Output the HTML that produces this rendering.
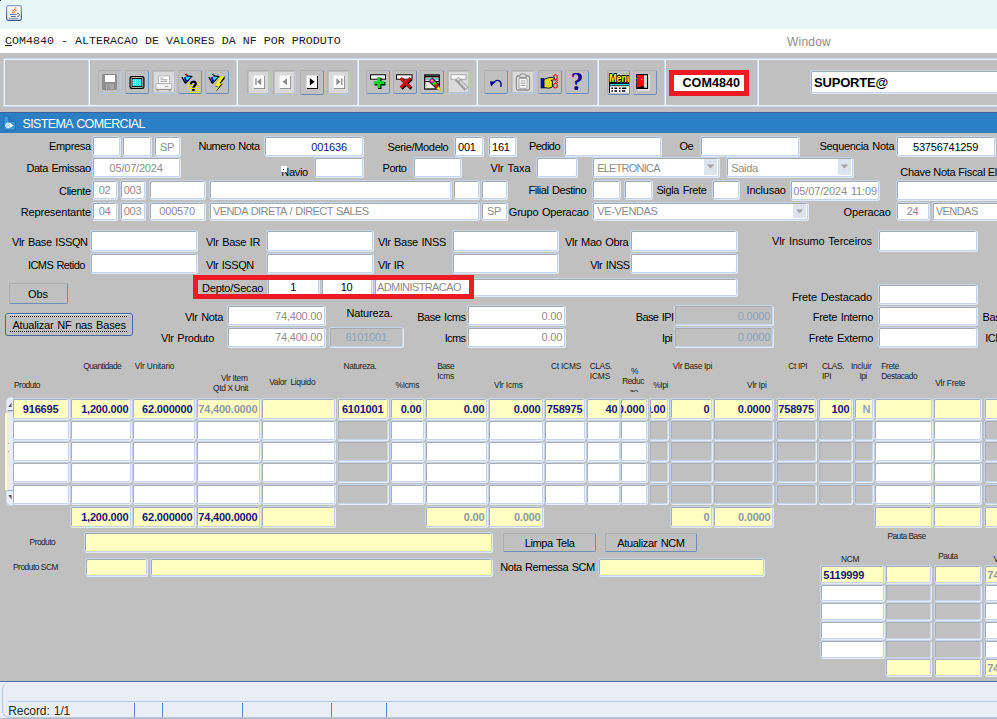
<!DOCTYPE html>
<html><head><meta charset="utf-8"><title>COM4840</title>
<style>
html,body{margin:0;padding:0;}
body{width:997px;height:719px;overflow:hidden;background:#c0c0c0;font-family:"Liberation Sans",sans-serif;}
#root{position:relative;width:997px;height:719px;overflow:hidden;background:#c0c0c0;}
#root div,#root svg{position:absolute;box-sizing:border-box;}
.l{white-space:pre;line-height:1;}
.f{background:#fff;border:1px solid #c4d4ec;border-radius:2px;box-shadow:inset 1px 1px 0 #a9a9a9,1px 1px 0 #e2e8f2;font-size:11px;white-space:nowrap;overflow:hidden;color:#000;}
.f.y{background:#ffffc2;}
.f.g{background:#c0c0c0;}
.f.dis{color:#8c8c8c;}
.tb{background:#c0c0c0;border-radius:2px;border:1px solid;border-color:#b0b0b0 #7090b8 #6a8ab8 #b0b0b0;}
.tb.d{border-color:#b2b2b2 #b4cbea #b4cbea #b2b2b2;}
.btn{background:#c0c0c0;border:1px solid;border-color:#adadad #6c8cba #6c8cba #adadad;border-radius:2px;text-align:center;font-size:10.67px;white-space:nowrap;}
.sep{background:#dfe8f6;width:1px;}
.f.gf{border-color:#c5d4ea;box-shadow:inset 1px 1px 0 #a9aeb6,1px 1px 0 #e8edf5;border-radius:2px;}

</style></head>
<body>
<div id="root">
<div style="left:0;top:0;width:997px;height:29px;background:#e7f6f7;"></div>
<svg style="left:5px;top:4px" width="18" height="18" viewBox="0 0 18 18">
<defs><linearGradient id="jg" x1="0" y1="0" x2="0" y2="1"><stop offset="0" stop-color="#fdfdfd"/><stop offset="1" stop-color="#e4e6ea"/></linearGradient>
<linearGradient id="jb" x1="0" y1="0" x2="0" y2="1"><stop offset="0" stop-color="#8aa2c0"/><stop offset="1" stop-color="#3b5a84"/></linearGradient></defs>
<rect x="1.6" y="1.6" width="14.8" height="14.8" rx="1.8" fill="url(#jg)" stroke="url(#jb)" stroke-width="1.2"/>
<path d="M8.4 9.4 C6.2 7 10.4 5.6 10.8 3.4" fill="none" stroke="#e8781c" stroke-width="1.3" stroke-dasharray="1.6 0.5"/>
<path d="M9.6 8.6 C8.8 7.2 11.4 6.6 12 5.6" fill="none" stroke="#e8781c" stroke-width="1.1" stroke-dasharray="1.4 0.5"/>
<path d="M4.8 10.4 H11.6" stroke="#44638e" stroke-width="0.9" fill="none"/>
<path d="M6 12.5 H10.8" stroke="#44638e" stroke-width="0.9" fill="none"/>
<path d="M4 14.4 H13" stroke="#5a7aa6" stroke-width="0.7" fill="none"/>
<path d="M12.2 9.2 C15.4 9.4 15 12.4 12.2 12.6" fill="none" stroke="#4a6a98" stroke-width="1"/>
</svg>
<div style="left:0;top:0;width:1.4px;height:0.9px;background:#2a3a66;"></div>
<div style="left:0;top:29px;width:997px;height:24px;background:#fff;"></div>
<div class="l" style="left:5px;top:36px;font-family:'Liberation Mono',monospace;font-size:11.67px;color:#1c1c1c;"><span style="text-decoration:underline">C</span>OM4840 - ALTERACAO DE VALORES DA NF POR PRODUTO</div>
<div class="l" style="top:36.44px;font-size:12px;color:#8c8c8c;left:787px;letter-spacing:0.22px;">Window</div>
<div style="left:3px;top:58px;width:1000px;height:49px;border:1px solid #c6d8f0;"></div><div style="left:4px;top:59px;width:1000px;height:47px;border:1px solid #eef3fa;"></div>
<div style="left:88px;top:60px;height:45px;width:1px;background:#c8dcf4;"></div><div style="left:89px;top:60px;height:45px;width:1px;background:#f0f4fa;"></div>
<div style="left:236px;top:60px;height:45px;width:1px;background:#c8dcf4;"></div><div style="left:237px;top:60px;height:45px;width:1px;background:#f0f4fa;"></div>
<div style="left:357px;top:60px;height:45px;width:1px;background:#c8dcf4;"></div><div style="left:358px;top:60px;height:45px;width:1px;background:#f0f4fa;"></div>
<div style="left:476px;top:60px;height:45px;width:1px;background:#c8dcf4;"></div><div style="left:477px;top:60px;height:45px;width:1px;background:#f0f4fa;"></div>
<div style="left:597px;top:60px;height:45px;width:1px;background:#c8dcf4;"></div><div style="left:598px;top:60px;height:45px;width:1px;background:#f0f4fa;"></div>
<div style="left:664px;top:60px;height:45px;width:1px;background:#c8dcf4;"></div><div style="left:665px;top:60px;height:45px;width:1px;background:#f0f4fa;"></div>
<div style="left:757px;top:60px;height:45px;width:1px;background:#c8dcf4;"></div><div style="left:758px;top:60px;height:45px;width:1px;background:#f0f4fa;"></div>
<div class="tb" style="left:98px;top:70px;width:23px;height:24px;"></div>
<div class="tb d" style="left:98px;top:70px;width:23px;height:24px;"></div>
<svg style="left:97.6px;top:70px" width="24" height="24" viewBox="0 0 24 24"><rect x="4" y="4" width="15" height="16" rx="1.2" fill="#8f8f8f"/>
<rect x="7" y="5" width="10" height="7" fill="#fff"/>
<rect x="8" y="14" width="8" height="6" fill="#a8a8a8"/>
<rect x="9.5" y="15" width="2" height="4" fill="#8f8f8f"/>
<path d="M7 4.5 H17" stroke="#777" stroke-width="1" stroke-dasharray="1 1"/>
<path d="M7 19.6 H16" stroke="#666" stroke-width="0.8" stroke-dasharray="1 1.2"/></svg>
<div class="tb" style="left:125px;top:70px;width:24px;height:24px;"></div>
<svg style="left:125px;top:70px" width="24" height="24" viewBox="0 0 24 24"><rect x="4.5" y="6" width="15" height="13" rx="2" fill="#000"/>
<rect x="6.2" y="7.6" width="11.6" height="9.8" rx="1" fill="none" stroke="#c8c8c8" stroke-width="1"/>
<rect x="7.5" y="9" width="9" height="7" fill="#38e0e8"/>
<path d="M7.5 10.4 H16.5 M7.5 12.4 H16.5 M7.5 14.4 H16.5" stroke="#e8ffff" stroke-width="0.7" stroke-dasharray="1.2 1"/></svg>
<div class="tb d" style="left:152px;top:70px;width:24px;height:24px;"></div>
<div style="left:154px;top:72px;width:20px;height:20px;background:#dadada;"></div>
<svg style="left:152px;top:70px" width="24" height="24" viewBox="0 0 24 24"><rect x="6.4" y="6" width="11.2" height="7.6" fill="#fff" stroke="#aaa" stroke-width="0.8"/>
<path d="M8.4 8 H11 M8.4 9.8 H15.4 M8.4 11.6 H15.4" stroke="#8a8a8a" stroke-width="0.8"/>
<rect x="4" y="13.8" width="15.4" height="5.4" fill="#f6f6f6" stroke="#a6a6a6" stroke-width="0.7"/>
<path d="M4 19.6 H19.4" stroke="#8a8a8a" stroke-width="1"/>
<path d="M5.6 20.2 V21.2 M17.6 20.2 V21.2" stroke="#8a8a8a" stroke-width="1.4"/>
<path d="M13 16.6 H16.5" stroke="#999" stroke-width="0.9"/></svg>
<div class="tb" style="left:178px;top:70px;width:24px;height:24px;"></div>
<svg style="left:178px;top:70px" width="24" height="24" viewBox="0 0 24 24"><path d="M5.8 7.6 L9.2 6.2 L13.4 6.8 L7.4 13.2 Z" fill="#0a10e8"/>
<path d="M8.2 6.8 L13.4 6.8 L9.8 10.6 L7.8 9 Z" fill="#10e8f4"/>
<path d="M3.9 7.1 L7.4 13.4" stroke="#000" stroke-width="1.2" fill="none"/>
<path d="M7.1 4.1 L9.6 5.8 L13.8 6.5 L7.6 13.4" stroke="#000" stroke-width="1.1" fill="none"/>
<circle cx="8.5" cy="4.3" r="0.75" fill="#f01010"/><rect x="10" y="12" width="1" height="1" fill="#f8f010"/><rect x="10" y="14" width="1" height="1" fill="#f8f010"/><rect x="10" y="16" width="1" height="1" fill="#f8f010"/><rect x="10" y="18" width="1" height="1" fill="#f8f010"/><rect x="12" y="12" width="1" height="1" fill="#f8f010"/><rect x="12" y="14" width="1" height="1" fill="#f8f010"/><rect x="12" y="16" width="1" height="1" fill="#f8f010"/><rect x="12" y="18" width="1" height="1" fill="#f8f010"/><rect x="12" y="20" width="1" height="1" fill="#f8f010"/><rect x="12" y="22" width="1" height="1" fill="#f8f010"/><rect x="14" y="12" width="1" height="1" fill="#f8f010"/><rect x="14" y="14" width="1" height="1" fill="#f8f010"/><rect x="14" y="16" width="1" height="1" fill="#f8f010"/><rect x="14" y="18" width="1" height="1" fill="#f8f010"/><rect x="14" y="20" width="1" height="1" fill="#f8f010"/><rect x="14" y="22" width="1" height="1" fill="#f8f010"/><rect x="16" y="12" width="1" height="1" fill="#f8f010"/><rect x="16" y="14" width="1" height="1" fill="#f8f010"/><rect x="16" y="16" width="1" height="1" fill="#f8f010"/><rect x="16" y="18" width="1" height="1" fill="#f8f010"/><rect x="16" y="20" width="1" height="1" fill="#f8f010"/><rect x="16" y="22" width="1" height="1" fill="#f8f010"/><rect x="18" y="12" width="1" height="1" fill="#f8f010"/><rect x="18" y="14" width="1" height="1" fill="#f8f010"/><rect x="18" y="16" width="1" height="1" fill="#f8f010"/><rect x="18" y="18" width="1" height="1" fill="#f8f010"/><rect x="18" y="20" width="1" height="1" fill="#f8f010"/><rect x="18" y="22" width="1" height="1" fill="#f8f010"/><rect x="20" y="12" width="1" height="1" fill="#f8f010"/><rect x="20" y="14" width="1" height="1" fill="#f8f010"/><rect x="20" y="16" width="1" height="1" fill="#f8f010"/><rect x="20" y="18" width="1" height="1" fill="#f8f010"/><rect x="20" y="20" width="1" height="1" fill="#f8f010"/><rect x="20" y="22" width="1" height="1" fill="#f8f010"/>
<path d="M12.9 14.4 C12.6 11 18 10.8 17.8 14 C17.7 15.6 15.4 15.6 15.4 17.8" fill="none" stroke="#000" stroke-width="2.2"/>
<rect x="14.1" y="19" width="2.6" height="1.9" fill="#000"/></svg>
<div class="tb" style="left:205px;top:70px;width:24px;height:24px;"></div>
<svg style="left:205px;top:70px" width="24" height="24" viewBox="0 0 24 24"><path d="M5.8 7.6 L9.2 6.2 L13.4 6.8 L7.4 13.2 Z" fill="#0a10e8"/>
<path d="M8.2 6.8 L13.4 6.8 L9.8 10.6 L7.8 9 Z" fill="#10e8f4"/>
<path d="M3.9 7.1 L7.4 13.4" stroke="#000" stroke-width="1.2" fill="none"/>
<path d="M7.1 4.1 L9.6 5.8 L13.8 6.5 L7.6 13.4" stroke="#000" stroke-width="1.1" fill="none"/>
<circle cx="8.5" cy="4.3" r="0.75" fill="#f01010"/><path d="M20.6 6.4 L16 6.4 L10.6 16.4 L14.2 16.4 L10.4 22 L18 13.8 L15.2 13.8 L20.2 8.2 L18.6 8.2 Z" fill="#000"/><path d="M19.6 6 L15.2 6.2 L9.8 16 L13.4 16 L9.6 21.4 L17 13.4 L14.4 13.4 Z" fill="#f8f410"/><path d="M15.2 6.2 L9.8 16 L12 16" stroke="#9a9a9a" stroke-width="0.5" fill="none"/></svg>
<div class="tb d" style="left:247px;top:70px;width:23px;height:24.5px;"></div>
<div style="left:249px;top:72px;width:19px;height:20.5px;background:#dadada;"></div>
<svg style="left:247px;top:70px" width="24" height="24" viewBox="0 0 24 24"><rect x="7" y="6" width="11" height="13" fill="#8c8c8c"/><rect x="6.5" y="5.5" width="10.6" height="12.6" fill="#fafafa"/><rect x="8.3" y="8.4" width="1.3" height="6.6" fill="#8c8c8c"/><path d="M14.2 8.2 V15.2 L10 11.7 Z" fill="#8c8c8c"/></svg>
<div class="tb d" style="left:273px;top:70px;width:23px;height:24.5px;"></div>
<div style="left:275px;top:72px;width:19px;height:20.5px;background:#dadada;"></div>
<svg style="left:273px;top:70px" width="24" height="24" viewBox="0 0 24 24"><rect x="7" y="6" width="11" height="13" fill="#8c8c8c"/><rect x="6.5" y="5.5" width="10.6" height="12.6" fill="#fafafa"/><path d="M14 8.2 V15.2 L9.6 11.7 Z" fill="#8c8c8c"/></svg>
<div class="tb" style="left:299.5px;top:70px;width:24px;height:24.5px;"></div>
<svg style="left:299.5px;top:70px" width="24" height="24" viewBox="0 0 24 24"><rect x="7" y="6" width="11" height="13" fill="#000"/><rect x="6.5" y="5.5" width="10.6" height="12.6" fill="#fafafa"/><path d="M9.8 8 V15.4 L14.6 11.7 Z" fill="#000"/></svg>
<div class="tb d" style="left:327px;top:70px;width:23px;height:24.5px;"></div>
<div style="left:329px;top:72px;width:19px;height:20.5px;background:#dadada;"></div>
<svg style="left:327px;top:70px" width="24" height="24" viewBox="0 0 24 24"><rect x="7" y="6" width="11" height="13" fill="#8c8c8c"/><rect x="6.5" y="5.5" width="10.6" height="12.6" fill="#fafafa"/><rect x="14.2" y="8.4" width="1.3" height="6.6" fill="#8c8c8c"/><path d="M9.4 8.2 V15.2 L13.6 11.7 Z" fill="#8c8c8c"/></svg>
<div class="tb" style="left:366px;top:70px;width:24px;height:24px;"></div>
<svg style="left:366px;top:70px" width="24" height="24" viewBox="0 0 24 24"><rect x="4.5" y="4.8" width="15" height="4.4" fill="#fff" stroke="#000" stroke-width="1"/>
<path d="M13.8 8 V19 M8.6 13.8 H19.4" stroke="#000" stroke-width="3.4"/>
<path d="M12.8 7 V18 M7.6 12.8 H18.4" stroke="#10d820" stroke-width="3"/></svg>
<div class="tb" style="left:393px;top:70px;width:24px;height:24px;"></div>
<svg style="left:393px;top:70px" width="24" height="24" viewBox="0 0 24 24"><rect x="3.6" y="4.8" width="15.4" height="4.4" fill="#fff" stroke="#000" stroke-width="1"/>
<path d="M8.6 9 L18.4 18.6 M18.4 9 L8.6 18.6" stroke="#000" stroke-width="3.2"/>
<path d="M7.6 8 L17.4 17.6 M17.4 8 L7.6 17.6" stroke="#d01018" stroke-width="2.8"/></svg>
<div class="tb" style="left:420px;top:70px;width:24px;height:24px;"></div>
<svg style="left:420px;top:70px" width="24" height="24" viewBox="0 0 24 24"><rect x="4.8" y="5" width="14.4" height="14" fill="#fff" stroke="#000" stroke-width="1.3"/>
<path d="M5 6.6 H19" stroke="#000" stroke-width="1.6"/>
<path d="M5.5 9 H19" stroke="#209090" stroke-width="1.2"/>
<path d="M5.5 11.5 H19" stroke="#000" stroke-width="1.2"/>
<path d="M5 19 L5 14 L9 14 Z" fill="#c8c8c8"/>
<path d="M10.5 9.5 L18 17" stroke="#000" stroke-width="5.4" stroke-linecap="butt"/>
<path d="M10.6 9.6 L13.4 12.4" stroke="#f018c0" stroke-width="4"/>
<path d="M13.4 12.4 L15.6 14.6" stroke="#18e020" stroke-width="4"/>
<path d="M15.6 14.6 L17.6 16.6" stroke="#f01818" stroke-width="4"/>
<path d="M16.4 18.8 L19 16.2 L21 21 Z" fill="#f8f020" stroke="#c0b000" stroke-width="0.4"/>
<circle cx="12" cy="10.6" r="0.9" fill="#f8f020"/></svg>
<div class="tb d" style="left:447px;top:70px;width:23px;height:24px;"></div>
<div style="left:449px;top:72px;width:19px;height:20px;background:#dadada;"></div>
<svg style="left:447px;top:70px" width="24" height="24" viewBox="0 0 24 24"><rect x="4" y="4.8" width="15" height="4.4" fill="#fff" stroke="#a8a8a8" stroke-width="1"/>
<path d="M9.5 8.5 L19.5 19" stroke="#9c9c9c" stroke-width="5"/>
<path d="M10 8 L19.5 18" stroke="#d8d8d8" stroke-width="2.2"/>
<path d="M11.5 11.8 L14.4 9.2" stroke="#888" stroke-width="1"/></svg>
<div class="tb" style="left:484px;top:70px;width:24px;height:24px;"></div>
<svg style="left:484px;top:70px" width="24" height="24" viewBox="0 0 24 24"><path d="M6 11.2 L11.6 11.8 L7 16.6 Z" fill="#000090"/>
<path d="M9.4 13.2 C12 8.6 18.6 9.6 16.7 16.9" fill="none" stroke="#000090" stroke-width="1.4"/></svg>
<div class="tb d" style="left:511px;top:70px;width:24px;height:24px;"></div>
<div style="left:513px;top:72px;width:20px;height:20px;background:#dadada;"></div>
<svg style="left:511px;top:70px" width="24" height="24" viewBox="0 0 24 24"><rect x="5.5" y="6" width="13" height="14" rx="1.4" fill="#eee" stroke="#8e8e8e" stroke-width="1.3"/>
<rect x="8" y="8.6" width="8" height="9.6" fill="#fff" stroke="#9a9a9a" stroke-width="0.9"/>
<path d="M9.5 4 H14.5 L15.6 7.4 H8.4 Z" fill="#dcdcdc" stroke="#8e8e8e" stroke-width="1"/>
<path d="M9.6 11 H14.4 M9.6 13.2 H14.4 M9.6 15.4 H14.4" stroke="#8a8a8a" stroke-width="0.9"/></svg>
<div class="tb" style="left:538px;top:70px;width:24px;height:24px;"></div>
<svg style="left:538px;top:70px" width="24" height="24" viewBox="0 0 24 24"><rect x="3" y="8.6" width="3" height="9.4" fill="#0818d8" stroke="#000" stroke-width="0.6"/>
<path d="M6 9.4 L11 7.6 L16.4 7.4 L16.4 9.8 L12.8 10.4 L14.4 11 L14.4 17 L11 18.2 L6 17.6 Z" fill="#f4e828" stroke="#000" stroke-width="0.9" stroke-linejoin="round"/>
<path d="M8 10 H13 M7 12 H13.6 M7 14 H13.6 M8 16 H13" stroke="#a89800" stroke-width="0.7" stroke-dasharray="1 1"/>
<ellipse cx="17.4" cy="7.2" rx="1.9" ry="2.4" fill="none" stroke="#e81818" stroke-width="1.1"/>
<ellipse cx="17.4" cy="15.6" rx="1.9" ry="2.4" fill="none" stroke="#e81818" stroke-width="1.1"/>
<path d="M17 9.6 L20 13 M17 13.2 L20 9.8" stroke="#e81818" stroke-width="1"/></svg>
<div class="tb" style="left:565px;top:70px;width:24px;height:24px;"></div>
<div class="l" style="left:565px;top:70px;width:24px;height:24px;line-height:24px;text-align:center;font-family:'Liberation Serif',serif;font-weight:bold;font-size:25px;color:#00008c;">?</div>
<div class="tb" style="left:606.5px;top:70px;width:23.5px;height:24.5px;"></div>
<svg style="left:607px;top:70px" width="22" height="24" viewBox="0 0 22 24">
<text x="2.2" y="11.6" font-family="Liberation Sans" font-weight="bold" font-size="11.5" fill="#000" stroke="#000" stroke-width="2" textLength="23" lengthAdjust="spacingAndGlyphs">Menu</text>
<text x="2.2" y="11.6" font-family="Liberation Sans" font-weight="bold" font-size="11.5" fill="#f8f810" textLength="23" lengthAdjust="spacingAndGlyphs">Menu</text>
<rect x="2" y="13" width="20" height="1" fill="#000"/>
<rect x="3" y="14" width="19" height="1.4" fill="#10e8f0"/>
<rect x="2" y="15.4" width="20" height="0.9" fill="#000"/>
<rect x="3" y="16.3" width="19" height="6.4" fill="#fff"/>
<rect x="2" y="13" width="1" height="10" fill="#000"/>
<path d="M4.4 18.2 H6 M7.4 18.2 H10 M12 18.2 H13.6 M15 18.2 H19.4 M4.4 21 H6 M7.4 21 H10 M12 21 H13.6 M15 21 H18.4" stroke="#000" stroke-width="1.4"/>
</svg>
<div class="tb" style="left:633px;top:70px;width:24px;height:24.5px;"></div>
<svg style="left:633px;top:70px" width="24" height="24" viewBox="0 0 24 24"><rect x="3.2" y="4" width="12" height="15" fill="#000"/>
<path d="M15.2 5 H16 V20 H4.4" stroke="#fff" stroke-width="1" fill="none"/>
<rect x="10.6" y="5.2" width="3.4" height="12.6" fill="#d4d4d4"/>
<path d="M4 5 H10.4 V15.6 H9.6 V16.4 H7 V17.2 H4 Z" fill="#f80808"/>
<path d="M7 17.6 H10.6 V16.4" stroke="#000" stroke-width="1" fill="none"/>
<rect x="8" y="8.8" width="1.3" height="1.3" fill="#f8e020"/>
<rect x="2.2" y="8" width="1.2" height="1" fill="#f8e020"/><rect x="2.2" y="11.6" width="1.2" height="1" fill="#f8e020"/></svg>
<div style="left:669px;top:70px;width:80px;height:26px;background:#ed1c24;"></div>
<div style="left:674px;top:75px;width:70px;height:16px;background:#fff;"></div>
<div class="l" style="top:77.13px;font-size:12.6px;color:#000;left:682.5px;font-weight:bold;">COM4840</div>
<div class="f " style="left:810px;top:70px;width:195px;height:23px;line-height:24.99px;font-size:13px;letter-spacing:-0.2px;padding-left:3px;font-weight:bold;">SUPORTE@</div>
<div style="left:0;top:112px;width:997px;height:21px;background:#2b7fc4;"></div>
<div style="left:0;top:112px;width:997px;height:1px;background:#3f5f9a;"></div>
<div class="l" style="top:117.52px;font-size:12.5px;color:#fff;left:22.5px;letter-spacing:-0.616px;word-spacing:0.9px;">SISTEMA COMERCIAL</div>
<svg style="left:3px;top:115px" width="14" height="16" viewBox="0 0 14 16">
<path d="M0.9 0.9 H5.8 V6.4 H12.3 V15.1 H0.9 Z" fill="#3d98da" stroke="#1f6db2" stroke-width="0.9"/>
<path d="M8 1 V4.4 H11.6 Z" fill="#3d98da" stroke="#1f6db2" stroke-width="0.8"/>
<circle cx="5" cy="10.4" r="2.1" fill="none" stroke="#fff" stroke-width="1.7" stroke-dasharray="1.1 0.55"/>
<circle cx="5" cy="10.4" r="1.5" fill="#fff"/><circle cx="5" cy="10.4" r="0.7" fill="#3d98da"/>
<path d="M6.9 8 L10.6 10.4 L6.9 12.8 Z" fill="#fff"/>
</svg>
<div class="l" style="top:140.89px;font-size:11.0px;color:#000;right:906.345px;letter-spacing:-0.345px;">Empresa</div>
<div class="f " style="left:92px;top:136px;width:28px;height:20px;line-height:20.38px;font-size:11.0px;padding-left:3px;"></div>
<div class="f " style="left:122px;top:136px;width:29px;height:20px;line-height:20.38px;font-size:11.0px;padding-left:3px;"></div>
<div class="f " style="left:154px;top:136px;width:26px;height:20px;line-height:20.38px;font-size:11.0px;letter-spacing:-0.2px;padding-left:0.2px;text-align:center;color:#8c8c8c;">SP</div>
<div class="l" style="top:140.89px;font-size:11.0px;color:#000;left:198.5px;letter-spacing:-0.474px;word-spacing:0.9px;">Numero Nota</div>
<div class="f " style="left:264px;top:136px;width:99px;height:20px;line-height:20.38px;font-size:11.0px;letter-spacing:-0.2px;text-align:right;padding-right:15.2px;color:#16167a;"><div style="right:15.2px;top:0;white-space:nowrap;">001636</div></div>
<div class="l" style="top:141.69px;font-size:11.0px;color:#000;left:387.5px;letter-spacing:-0.334px;">Serie/Modelo</div>
<div class="f " style="left:454px;top:136px;width:29px;height:20px;line-height:20.38px;font-size:11.0px;letter-spacing:-0.2px;padding-left:3px;">001</div>
<div class="f " style="left:488px;top:136px;width:28px;height:20px;line-height:20.38px;font-size:11.0px;letter-spacing:-0.2px;padding-left:3px;">161</div>
<div class="l" style="top:140.89px;font-size:11.0px;color:#000;left:529px;letter-spacing:-0.542px;">Pedido</div>
<div class="f " style="left:564px;top:136px;width:97px;height:20px;line-height:20.38px;font-size:11.0px;padding-left:3px;"></div>
<div class="l" style="top:140.89px;font-size:11.0px;color:#000;left:679.5px;letter-spacing:-0.587px;">Oe</div>
<div class="f " style="left:700px;top:136px;width:99px;height:20px;line-height:20.38px;font-size:11.0px;padding-left:3px;"></div>
<div class="l" style="top:140.89px;font-size:11.0px;color:#000;left:819.5px;letter-spacing:-0.313px;word-spacing:0.9px;">Sequencia Nota</div>
<div class="f " style="left:896px;top:136px;width:99px;height:20px;line-height:20.38px;font-size:11.0px;letter-spacing:-0.2px;padding-left:0.2px;text-align:center;">53756741259</div>
<div class="l" style="top:162.79px;font-size:11.0px;color:#000;right:906.431px;letter-spacing:-0.431px;word-spacing:0.9px;">Data Emissao</div>
<div class="f " style="left:92px;top:157px;width:88px;height:20px;line-height:20.38px;font-size:11.0px;letter-spacing:-0.2px;padding-left:0.2px;text-align:center;color:#8c8c8c;">05/07/2024</div>
<div class="l" style="top:166.79px;font-size:11.0px;color:#000;left:281.3px;letter-spacing:-0.325px;">Navio</div>
<div style="left:281px;top:166px;width:6px;height:6px;background:#fff;"></div><div style="left:283px;top:169px;width:1px;height:1px;background:#445;"></div>
<div class="f " style="left:314px;top:157px;width:49px;height:20px;line-height:20.38px;font-size:11.0px;padding-left:3px;"></div>
<div class="l" style="top:162.79px;font-size:11.0px;color:#000;left:382.5px;letter-spacing:-0.458px;">Porto</div>
<div class="f " style="left:413px;top:157px;width:48px;height:20px;line-height:20.38px;font-size:11.0px;padding-left:3px;"></div>
<div class="l" style="top:162.79px;font-size:11.0px;color:#000;left:490.4px;letter-spacing:-0.042px;word-spacing:0.9px;">Vlr Taxa</div>
<div class="f " style="left:536px;top:157px;width:41px;height:20px;line-height:20.38px;font-size:11.0px;padding-left:3px;"></div>
<div class="f " style="left:592px;top:157px;width:127px;height:20px;line-height:20.38px;font-size:11.0px;letter-spacing:-0.769px;padding-left:4.2px;color:#8c8c8c;">ELETRONICA</div>
<div style="left:704px;top:159px;width:13px;height:16px;background:#dde3ec;"></div>
<svg style="left:706px;top:164px" width="9" height="5" viewBox="0 0 9 5"><path d="M0.8 0.4 H8.2 L4.5 4.4 Z" fill="#a4a4a4"/></svg>
<div class="f " style="left:726px;top:157px;width:127px;height:20px;line-height:20.38px;font-size:11.0px;letter-spacing:-0.287px;padding-left:4.2px;color:#8c8c8c;">Saida</div>
<div style="left:838px;top:159px;width:13px;height:16px;background:#dde3ec;"></div>
<svg style="left:840px;top:164px" width="9" height="5" viewBox="0 0 9 5"><path d="M0.8 0.4 H8.2 L4.5 4.4 Z" fill="#a4a4a4"/></svg>
<div class="l" style="top:166.79px;font-size:11.0px;color:#000;left:900.3px;letter-spacing:-0.3px;">Chave Nota Fiscal Eletronica</div>
<div class="l" style="top:186.29px;font-size:11.0px;color:#000;right:906.392px;letter-spacing:-0.392px;">Cliente</div>
<div class="f " style="left:92px;top:180px;width:25px;height:19px;line-height:18.38px;font-size:11.0px;letter-spacing:-0.2px;padding-left:0.2px;text-align:center;color:#8c8c8c;">02</div>
<div class="f " style="left:120px;top:180px;width:25px;height:19px;line-height:18.38px;font-size:11.0px;letter-spacing:-0.2px;padding-left:0.2px;text-align:center;color:#8c8c8c;">003</div>
<div class="f " style="left:149px;top:180px;width:56px;height:19px;line-height:18.38px;font-size:11.0px;padding-left:3px;"></div>
<div class="f " style="left:209px;top:180px;width:242px;height:19px;line-height:18.38px;font-size:11.0px;padding-left:3px;"></div>
<div class="f " style="left:453px;top:180px;width:26px;height:19px;line-height:18.38px;font-size:11.0px;padding-left:3px;"></div>
<div class="f " style="left:481px;top:180px;width:26px;height:19px;line-height:18.38px;font-size:11.0px;padding-left:3px;"></div>
<div class="l" style="top:184.79px;font-size:11.0px;color:#000;left:528.5px;letter-spacing:-0.44px;word-spacing:0.9px;">Filial Destino</div>
<div class="f " style="left:592px;top:180px;width:28px;height:19px;line-height:18.38px;font-size:11.0px;padding-left:3px;"></div>
<div class="f " style="left:624px;top:180px;width:28px;height:19px;line-height:18.38px;font-size:11.0px;padding-left:3px;"></div>
<div class="l" style="top:184.79px;font-size:11.0px;color:#000;left:656.4px;letter-spacing:-0.354px;word-spacing:0.9px;">Sigla Frete</div>
<div class="f " style="left:712px;top:180px;width:27px;height:19px;line-height:18.38px;font-size:11.0px;padding-left:3px;"></div>
<div class="l" style="top:184.79px;font-size:11.0px;color:#000;left:746.6px;letter-spacing:-0.234px;">Inclusao</div>
<div class="f " style="left:790px;top:180px;width:89px;height:20px;line-height:20.38px;font-size:11.0px;word-spacing:0.9px;letter-spacing:-0.126px;padding-left:2.3px;color:#8c8c8c;">05/07/2024 11:09</div>
<div class="f " style="left:896px;top:180px;width:109px;height:20px;line-height:20.38px;font-size:11.0px;padding-left:3px;"></div>
<div class="l" style="top:206.79px;font-size:11.0px;color:#000;right:906.151px;letter-spacing:-0.151px;">Representante</div>
<div class="f " style="left:92px;top:202px;width:25px;height:18px;line-height:16.38px;font-size:11.0px;letter-spacing:-0.2px;padding-left:0.2px;text-align:center;color:#8c8c8c;">04</div>
<div class="f " style="left:120px;top:202px;width:25px;height:18px;line-height:16.38px;font-size:11.0px;letter-spacing:-0.2px;padding-left:0.2px;text-align:center;color:#8c8c8c;">003</div>
<div class="f " style="left:149px;top:202px;width:56px;height:18px;line-height:16.38px;font-size:11.0px;letter-spacing:-0.2px;padding-left:0.2px;text-align:center;color:#8c8c8c;">000570</div>
<div class="f " style="left:209px;top:202px;width:270px;height:18px;line-height:16.38px;font-size:11.0px;word-spacing:0.9px;letter-spacing:-0.585px;padding-left:3px;color:#8c8c8c;">VENDA DIRETA / DIRECT SALES</div>
<div class="f " style="left:481px;top:202px;width:26px;height:18px;line-height:16.38px;font-size:11.0px;letter-spacing:-0.2px;padding-left:0.2px;text-align:center;color:#8c8c8c;">SP</div>
<div class="l" style="top:207.09px;font-size:11.0px;color:#000;left:508.8px;letter-spacing:-0.217px;word-spacing:0.9px;">Grupo Operacao</div>
<div class="f " style="left:592px;top:202px;width:216px;height:18px;line-height:17.98px;font-size:11.0px;letter-spacing:-0.364px;padding-left:4.2px;color:#8c8c8c;">VE-VENDAS</div>
<div style="left:793px;top:204px;width:13px;height:14px;background:#dde3ec;"></div>
<svg style="left:795px;top:209px" width="9" height="5" viewBox="0 0 9 5"><path d="M0.8 0.4 H8.2 L4.5 4.4 Z" fill="#a4a4a4"/></svg>
<div class="l" style="top:207.09px;font-size:11.0px;color:#000;left:843.5px;letter-spacing:-0.138px;">Operacao</div>
<div class="f " style="left:896px;top:202px;width:33px;height:18px;line-height:16.38px;font-size:11.0px;letter-spacing:-0.2px;padding-left:0.2px;text-align:center;color:#8c8c8c;">24</div>
<div class="f " style="left:932px;top:202px;width:73px;height:18px;line-height:16.38px;font-size:11.0px;letter-spacing:-0.539px;padding-left:2.7px;color:#8c8c8c;">VENDAS</div>
<div class="l" style="top:236.89px;font-size:11.0px;color:#000;left:12px;letter-spacing:-0.354px;word-spacing:0.9px;">Vlr Base ISSQN</div>
<div class="f " style="left:90px;top:230px;width:107px;height:21px;line-height:22.38px;font-size:11.0px;padding-left:3px;"></div>
<div class="l" style="top:259.99px;font-size:11.0px;color:#000;left:28px;letter-spacing:-0.596px;word-spacing:0.9px;">ICMS Retido</div>
<div class="f " style="left:90px;top:253px;width:107px;height:20px;line-height:20.38px;font-size:11.0px;padding-left:3px;"></div>
<div class="l" style="top:236.89px;font-size:11.0px;color:#000;left:206px;letter-spacing:-0.294px;word-spacing:0.9px;">Vlr Base IR</div>
<div class="f " style="left:266px;top:230px;width:107px;height:21px;line-height:22.38px;font-size:11.0px;padding-left:3px;"></div>
<div class="l" style="top:259.99px;font-size:11.0px;color:#000;left:206px;letter-spacing:-0.426px;word-spacing:0.9px;">Vlr ISSQN</div>
<div class="f " style="left:266px;top:253px;width:107px;height:20px;line-height:20.38px;font-size:11.0px;padding-left:3px;"></div>
<div class="l" style="top:236.89px;font-size:11.0px;color:#000;left:378px;letter-spacing:-0.323px;word-spacing:0.9px;">Vlr Base INSS</div>
<div class="f " style="left:452px;top:230px;width:106px;height:21px;line-height:22.38px;font-size:11.0px;padding-left:3px;"></div>
<div class="l" style="top:259.99px;font-size:11.0px;color:#000;left:378px;letter-spacing:-0.4px;word-spacing:0.9px;">Vlr IR</div>
<div class="f " style="left:452px;top:253px;width:106px;height:20px;line-height:20.38px;font-size:11.0px;padding-left:3px;"></div>
<div class="l" style="top:236.89px;font-size:11.0px;color:#000;left:565px;letter-spacing:-0.326px;word-spacing:0.9px;">Vlr Mao Obra</div>
<div class="f " style="left:630px;top:230px;width:107px;height:21px;line-height:22.38px;font-size:11.0px;padding-left:3px;"></div>
<div class="l" style="top:259.99px;font-size:11.0px;color:#000;left:590.2px;letter-spacing:-0.447px;word-spacing:0.9px;">Vlr INSS</div>
<div class="f " style="left:630px;top:253px;width:107px;height:20px;line-height:20.38px;font-size:11.0px;padding-left:3px;"></div>
<div class="l" style="top:236.29px;font-size:11.0px;color:#000;left:772px;letter-spacing:-0.093px;word-spacing:0.9px;">Vlr Insumo Terceiros</div>
<div class="f " style="left:878px;top:230px;width:99px;height:21px;line-height:22.38px;font-size:11.0px;padding-left:3px;"></div>
<div class="l" style="top:282.69px;font-size:11.0px;color:#000;left:202px;letter-spacing:-0.218px;">Depto/Secao</div>
<div class="f " style="left:267px;top:278px;width:52px;height:18px;line-height:16.38px;font-size:11.0px;letter-spacing:-0.2px;padding-left:0.2px;text-align:center;border-radius:0;">1</div>
<div class="f " style="left:321px;top:278px;width:51px;height:18px;line-height:16.38px;font-size:11.0px;letter-spacing:-0.2px;padding-left:0.2px;text-align:center;border-radius:0;">10</div>
<div class="f " style="left:374px;top:278px;width:363px;height:18px;line-height:16.38px;font-size:11.0px;letter-spacing:-0.598px;padding-left:2px;color:#8c8c8c;">ADMINISTRACAO</div>
<div style="left:193px;top:275px;width:281px;height:24px;border:5px solid #ed1c24;"></div>
<div class="btn" style="left:9px;top:283px;width:59px;height:21px;"></div>
<div class="l" style="top:288.99px;font-size:11.0px;color:#000;left:28.1px;letter-spacing:-0.091px;">Obs</div>
<div class="btn" style="left:5px;top:313px;width:128px;height:23px;border:1.5px solid #47679d;border-radius:3px;box-shadow:inset 0 1px 0 #d8dee8;"></div>
<div class="l" style="top:320.09px;font-size:11.0px;color:#000;left:12.4px;letter-spacing:-0.197px;word-spacing:0.9px;">Atualizar NF nas Bases</div>
<div style="left:10px;top:316px;width:118px;height:1px;background:repeating-linear-gradient(90deg,#000 0 1px,transparent 1px 2px);"></div>
<div style="left:10px;top:331px;width:118px;height:1px;background:repeating-linear-gradient(90deg,#000 0 1px,transparent 1px 2px);"></div>
<div class="l" style="top:311.69px;font-size:11.0px;color:#000;left:185px;letter-spacing:-0.317px;word-spacing:0.9px;">Vlr Nota</div>
<div class="f " style="left:227px;top:305px;width:98px;height:20px;line-height:20.38px;font-size:11.0px;letter-spacing:-0.2px;text-align:right;padding-right:1.8px;color:#8c8c8c;"><div style="right:1.8px;top:0;white-space:nowrap;">74,400.00</div></div>
<div class="l" style="top:332.89px;font-size:11.0px;color:#000;left:161px;letter-spacing:-0.266px;word-spacing:0.9px;">Vlr Produto</div>
<div class="f " style="left:227px;top:327px;width:98px;height:20px;line-height:18.38px;font-size:11.0px;letter-spacing:-0.2px;text-align:right;padding-right:1.8px;color:#8c8c8c;"><div style="right:1.8px;top:0;white-space:nowrap;">74,400.00</div></div>
<div class="l" style="top:308.39px;font-size:11.0px;color:#000;left:346.5px;letter-spacing:-0.188px;">Natureza.</div>
<div class="f g" style="left:329px;top:327px;width:74px;height:20px;line-height:18.38px;font-size:11.0px;letter-spacing:-0.2px;padding-left:0.2px;text-align:center;color:#8aa0bc;">6101001</div>
<div class="l" style="top:311.69px;font-size:11.0px;color:#000;right:531.428px;letter-spacing:-0.428px;word-spacing:0.9px;">Base Icms</div>
<div class="f " style="left:467px;top:305px;width:98px;height:20px;line-height:20.38px;font-size:11.0px;letter-spacing:-0.2px;text-align:right;padding-right:1.8px;color:#8c8c8c;"><div style="right:1.8px;top:0;white-space:nowrap;">0.00</div></div>
<div class="l" style="top:332.89px;font-size:11.0px;color:#000;right:531.63px;letter-spacing:-0.63px;">Icms</div>
<div class="f " style="left:467px;top:327px;width:98px;height:20px;line-height:18.38px;font-size:11.0px;letter-spacing:-0.2px;text-align:right;padding-right:1.8px;color:#8c8c8c;"><div style="right:1.8px;top:0;white-space:nowrap;">0.00</div></div>
<div class="l" style="top:312.29px;font-size:11.0px;color:#000;right:323.597px;letter-spacing:-0.597px;word-spacing:0.9px;">Base IPI</div>
<div class="f g" style="left:674px;top:305px;width:99px;height:20px;line-height:20.38px;font-size:11.0px;letter-spacing:-0.2px;text-align:right;padding-right:1.8px;color:#8aa0bc;"><div style="right:1.8px;top:0;white-space:nowrap;">0.0000</div></div>
<div class="l" style="top:332.89px;font-size:11.0px;color:#000;right:325.039px;letter-spacing:-0.539px;">Ipi</div>
<div class="f g" style="left:674px;top:327px;width:99px;height:20px;line-height:18.38px;font-size:11.0px;letter-spacing:-0.2px;text-align:right;padding-right:1.8px;color:#8aa0bc;"><div style="right:1.8px;top:0;white-space:nowrap;">0.0000</div></div>
<div class="l" style="top:291.89px;font-size:11.0px;color:#000;right:125.16099999999994px;letter-spacing:-0.161px;word-spacing:0.9px;">Frete Destacado</div>
<div class="f " style="left:878px;top:284px;width:99px;height:20px;line-height:20.38px;font-size:11.0px;padding-left:3px;"></div>
<div class="l" style="top:312.09px;font-size:11.0px;color:#000;right:123.97500000000002px;letter-spacing:-0.275px;word-spacing:0.9px;">Frete Interno</div>
<div class="f " style="left:878px;top:306px;width:99px;height:19px;line-height:18.38px;font-size:11.0px;padding-left:3px;"></div>
<div class="l" style="top:332.99px;font-size:11.0px;color:#000;right:123.94900000000007px;letter-spacing:-0.249px;word-spacing:0.9px;">Frete Externo</div>
<div class="f " style="left:878px;top:327px;width:99px;height:20px;line-height:20.38px;font-size:11.0px;padding-left:3px;"></div>
<div class="l" style="top:312.09px;font-size:11.0px;color:#000;left:982.5px;letter-spacing:-0.4px;">Base</div>
<div class="l" style="top:332.99px;font-size:11.0px;color:#000;left:985.3px;letter-spacing:-0.5px;">ICMS</div>
<div class="l" style="top:362.09px;font-size:8.4px;color:#222;left:83.2px;letter-spacing:-0.524px;">Quantidade</div>
<div class="l" style="top:362.09px;font-size:8.4px;color:#222;left:134.8px;letter-spacing:-0.154px;">Vlr Unitario</div>
<div class="l" style="top:380.99px;font-size:8.4px;color:#222;left:14px;letter-spacing:-0.474px;">Produto</div>
<div class="l" style="top:374.19px;font-size:8.4px;color:#222;left:221px;letter-spacing:-0.267px;">Vlr Item</div>
<div class="l" style="top:384.19px;font-size:8.4px;color:#222;left:213px;letter-spacing:-0.355px;">Qtd X Unit</div>
<div class="l" style="top:378.19px;font-size:8.4px;color:#222;left:269.2px;letter-spacing:-0.325px;">Valor  Liquido</div>
<div class="l" style="top:362.09px;font-size:8.4px;color:#222;left:343.5px;letter-spacing:-0.413px;">Natureza.</div>
<div class="l" style="top:380.99px;font-size:8.4px;color:#222;left:395.6px;letter-spacing:-0.34px;">%Icms</div>
<div class="l" style="top:362.09px;font-size:8.4px;color:#222;left:437.2px;letter-spacing:-0.537px;">Base</div>
<div class="l" style="top:371.99px;font-size:8.4px;color:#222;left:437.2px;letter-spacing:-0.233px;">Icms</div>
<div class="l" style="top:380.99px;font-size:8.4px;color:#222;left:494px;letter-spacing:-0.191px;">Vlr Icms</div>
<div class="l" style="top:362.09px;font-size:8.4px;color:#222;left:551px;letter-spacing:-0.233px;">Ct ICMS</div>
<div class="l" style="top:362.09px;font-size:8.4px;color:#222;left:589.7px;letter-spacing:-0.435px;">CLAS.</div>
<div class="l" style="top:371.99px;font-size:8.4px;color:#222;left:589.7px;letter-spacing:-0.125px;">ICMS</div>
<div class="l" style="top:366.99px;font-size:8.4px;color:#222;left:631px;letter-spacing:-1.469px;">%</div>
<div class="l" style="top:376.99px;font-size:8.4px;color:#222;left:622.2px;letter-spacing:-0.516px;">Reduc</div>
<div style="left:622px;top:388px;width:24px;height:2.2px;overflow:hidden;top:390px;"><div class="l" style="left:7.5px;top:-2.4px;font-size:8px;color:#222;letter-spacing:-0.3px;">ao</div></div>
<div class="l" style="top:380.99px;font-size:8.4px;color:#222;left:653.3px;letter-spacing:-0.41px;">%Ipi</div>
<div class="l" style="top:362.09px;font-size:8.4px;color:#222;left:672.8px;letter-spacing:-0.304px;">Vlr Base Ipi</div>
<div class="l" style="top:380.99px;font-size:8.4px;color:#222;left:747.1px;letter-spacing:-0.282px;">Vlr Ipi</div>
<div class="l" style="top:362.09px;font-size:8.4px;color:#222;left:788.3px;letter-spacing:-0.334px;">Ct IPI</div>
<div class="l" style="top:362.09px;font-size:8.4px;color:#222;left:822px;letter-spacing:-0.455px;">CLAS.</div>
<div class="l" style="top:371.99px;font-size:8.4px;color:#222;left:822px;letter-spacing:-0.29px;">IPI</div>
<div class="l" style="top:362.09px;font-size:8.4px;color:#222;left:850.9px;letter-spacing:-0.258px;">Incluir</div>
<div class="l" style="top:371.99px;font-size:8.4px;color:#222;left:859.5px;letter-spacing:-0.624px;">Ipi</div>
<div class="l" style="top:362.29px;font-size:8.4px;color:#222;left:881.2px;letter-spacing:-0.321px;">Frete</div>
<div class="l" style="top:372.09px;font-size:8.4px;color:#222;left:881.2px;letter-spacing:-0.44px;">Destacado</div>
<div class="l" style="top:379.09px;font-size:8.4px;color:#222;left:935.2px;letter-spacing:-0.223px;">Vlr Frete</div>
<div class="f y gf" style="left:12px;top:398px;width:57px;height:21px;line-height:20.38px;font-size:11.0px;letter-spacing:-0.2px;padding-left:0.2px;text-align:center;color:#16167a;font-weight:bold;">916695</div>
<div class="f gf" style="left:12px;top:420px;width:57px;height:20px;line-height:20.38px;font-size:11.0px;padding-left:3px;"></div>
<div class="f gf" style="left:12px;top:441px;width:57px;height:20px;line-height:20.38px;font-size:11.0px;padding-left:3px;"></div>
<div class="f gf" style="left:12px;top:462px;width:57px;height:20px;line-height:20.38px;font-size:11.0px;padding-left:3px;"></div>
<div class="f gf" style="left:12px;top:484px;width:57px;height:20px;line-height:20.38px;font-size:11.0px;padding-left:3px;"></div>
<div class="f y gf" style="left:70px;top:398px;width:61px;height:21px;line-height:20.38px;font-size:11.0px;letter-spacing:-0.2px;text-align:right;padding-right:1.7px;color:#16167a;font-weight:bold;"><div style="right:1.7px;top:0;white-space:nowrap;">1,200.000</div></div>
<div class="f gf" style="left:70px;top:420px;width:61px;height:20px;line-height:20.38px;font-size:11.0px;padding-left:3px;"></div>
<div class="f gf" style="left:70px;top:441px;width:61px;height:20px;line-height:20.38px;font-size:11.0px;padding-left:3px;"></div>
<div class="f gf" style="left:70px;top:462px;width:61px;height:20px;line-height:20.38px;font-size:11.0px;padding-left:3px;"></div>
<div class="f gf" style="left:70px;top:484px;width:61px;height:20px;line-height:20.38px;font-size:11.0px;padding-left:3px;"></div>
<div class="f y gf" style="left:132px;top:398px;width:63px;height:21px;line-height:20.38px;font-size:11.0px;letter-spacing:-0.2px;text-align:right;padding-right:1.7px;color:#16167a;font-weight:bold;"><div style="right:1.7px;top:0;white-space:nowrap;">62.000000</div></div>
<div class="f gf" style="left:132px;top:420px;width:63px;height:20px;line-height:20.38px;font-size:11.0px;padding-left:3px;"></div>
<div class="f gf" style="left:132px;top:441px;width:63px;height:20px;line-height:20.38px;font-size:11.0px;padding-left:3px;"></div>
<div class="f gf" style="left:132px;top:462px;width:63px;height:20px;line-height:20.38px;font-size:11.0px;padding-left:3px;"></div>
<div class="f gf" style="left:132px;top:484px;width:63px;height:20px;line-height:20.38px;font-size:11.0px;padding-left:3px;"></div>
<div class="f y gf" style="left:196px;top:398px;width:64px;height:21px;line-height:20.38px;font-size:11.0px;letter-spacing:-0.2px;text-align:right;padding-right:1.7px;color:#8a9aa6;font-weight:bold;"><div style="right:1.7px;top:0;white-space:nowrap;">74,400.0000</div></div>
<div class="f gf" style="left:196px;top:420px;width:64px;height:20px;line-height:20.38px;font-size:11.0px;padding-left:3px;"></div>
<div class="f gf" style="left:196px;top:441px;width:64px;height:20px;line-height:20.38px;font-size:11.0px;padding-left:3px;"></div>
<div class="f gf" style="left:196px;top:462px;width:64px;height:20px;line-height:20.38px;font-size:11.0px;padding-left:3px;"></div>
<div class="f gf" style="left:196px;top:484px;width:64px;height:20px;line-height:20.38px;font-size:11.0px;padding-left:3px;"></div>
<div class="f y gf" style="left:261px;top:398px;width:74px;height:21px;line-height:20.38px;font-size:11.0px;padding-left:1.5px;color:#16167a;font-weight:bold;"></div>
<div class="f gf" style="left:261px;top:420px;width:74px;height:20px;line-height:20.38px;font-size:11.0px;padding-left:3px;"></div>
<div class="f gf" style="left:261px;top:441px;width:74px;height:20px;line-height:20.38px;font-size:11.0px;padding-left:3px;"></div>
<div class="f gf" style="left:261px;top:462px;width:74px;height:20px;line-height:20.38px;font-size:11.0px;padding-left:3px;"></div>
<div class="f gf" style="left:261px;top:484px;width:74px;height:20px;line-height:20.38px;font-size:11.0px;padding-left:3px;"></div>
<div class="f y gf" style="left:337px;top:398px;width:51px;height:21px;line-height:20.38px;font-size:11.0px;letter-spacing:-0.2px;padding-left:0.2px;text-align:center;color:#16167a;font-weight:bold;">6101001</div>
<div class="f gf g" style="left:337px;top:420px;width:51px;height:20px;line-height:20.38px;font-size:11.0px;padding-left:3px;"></div>
<div class="f gf g" style="left:337px;top:441px;width:51px;height:20px;line-height:20.38px;font-size:11.0px;padding-left:3px;"></div>
<div class="f gf g" style="left:337px;top:462px;width:51px;height:20px;line-height:20.38px;font-size:11.0px;padding-left:3px;"></div>
<div class="f gf g" style="left:337px;top:484px;width:51px;height:20px;line-height:20.38px;font-size:11.0px;padding-left:3px;"></div>
<div class="f y gf" style="left:390px;top:398px;width:34px;height:21px;line-height:20.38px;font-size:11.0px;letter-spacing:-0.2px;text-align:right;padding-right:1.7px;color:#16167a;font-weight:bold;"><div style="right:1.7px;top:0;white-space:nowrap;">0.00</div></div>
<div class="f gf" style="left:390px;top:420px;width:34px;height:20px;line-height:20.38px;font-size:11.0px;padding-left:3px;"></div>
<div class="f gf" style="left:390px;top:441px;width:34px;height:20px;line-height:20.38px;font-size:11.0px;padding-left:3px;"></div>
<div class="f gf" style="left:390px;top:462px;width:34px;height:20px;line-height:20.38px;font-size:11.0px;padding-left:3px;"></div>
<div class="f gf" style="left:390px;top:484px;width:34px;height:20px;line-height:20.38px;font-size:11.0px;padding-left:3px;"></div>
<div class="f y gf" style="left:425px;top:398px;width:62px;height:21px;line-height:20.38px;font-size:11.0px;letter-spacing:-0.2px;text-align:right;padding-right:1.7px;color:#16167a;font-weight:bold;"><div style="right:1.7px;top:0;white-space:nowrap;">0.00</div></div>
<div class="f gf" style="left:425px;top:420px;width:62px;height:20px;line-height:20.38px;font-size:11.0px;padding-left:3px;"></div>
<div class="f gf" style="left:425px;top:441px;width:62px;height:20px;line-height:20.38px;font-size:11.0px;padding-left:3px;"></div>
<div class="f gf" style="left:425px;top:462px;width:62px;height:20px;line-height:20.38px;font-size:11.0px;padding-left:3px;"></div>
<div class="f gf" style="left:425px;top:484px;width:62px;height:20px;line-height:20.38px;font-size:11.0px;padding-left:3px;"></div>
<div class="f y gf" style="left:488px;top:398px;width:55px;height:21px;line-height:20.38px;font-size:11.0px;letter-spacing:-0.2px;text-align:right;padding-right:1.7px;color:#16167a;font-weight:bold;"><div style="right:1.7px;top:0;white-space:nowrap;">0.000</div></div>
<div class="f gf" style="left:488px;top:420px;width:55px;height:20px;line-height:20.38px;font-size:11.0px;padding-left:3px;"></div>
<div class="f gf" style="left:488px;top:441px;width:55px;height:20px;line-height:20.38px;font-size:11.0px;padding-left:3px;"></div>
<div class="f gf" style="left:488px;top:462px;width:55px;height:20px;line-height:20.38px;font-size:11.0px;padding-left:3px;"></div>
<div class="f gf" style="left:488px;top:484px;width:55px;height:20px;line-height:20.38px;font-size:11.0px;padding-left:3px;"></div>
<div class="f y gf" style="left:544px;top:398px;width:41px;height:21px;line-height:20.38px;font-size:11.0px;letter-spacing:-0.2px;padding-left:0.2px;text-align:center;color:#16167a;font-weight:bold;">758975</div>
<div class="f gf" style="left:544px;top:420px;width:41px;height:20px;line-height:20.38px;font-size:11.0px;padding-left:3px;"></div>
<div class="f gf" style="left:544px;top:441px;width:41px;height:20px;line-height:20.38px;font-size:11.0px;padding-left:3px;"></div>
<div class="f gf" style="left:544px;top:462px;width:41px;height:20px;line-height:20.38px;font-size:11.0px;padding-left:3px;"></div>
<div class="f gf" style="left:544px;top:484px;width:41px;height:20px;line-height:20.38px;font-size:11.0px;padding-left:3px;"></div>
<div class="f y gf" style="left:586px;top:398px;width:34px;height:21px;line-height:20.38px;font-size:11.0px;letter-spacing:-0.2px;text-align:right;padding-right:1.7px;color:#16167a;font-weight:bold;"><div style="right:1.7px;top:0;white-space:nowrap;">40</div></div>
<div class="f gf" style="left:586px;top:420px;width:34px;height:20px;line-height:20.38px;font-size:11.0px;padding-left:3px;"></div>
<div class="f gf" style="left:586px;top:441px;width:34px;height:20px;line-height:20.38px;font-size:11.0px;padding-left:3px;"></div>
<div class="f gf" style="left:586px;top:462px;width:34px;height:20px;line-height:20.38px;font-size:11.0px;padding-left:3px;"></div>
<div class="f gf" style="left:586px;top:484px;width:34px;height:20px;line-height:20.38px;font-size:11.0px;padding-left:3px;"></div>
<div class="f y gf" style="left:620px;top:398px;width:27px;height:21px;line-height:20.38px;font-size:11.0px;letter-spacing:-0.2px;text-align:right;padding-right:1.7px;color:#16167a;font-weight:bold;"><div style="right:1.7px;top:0;white-space:nowrap;">0.000</div></div>
<div class="f gf" style="left:620px;top:420px;width:27px;height:20px;line-height:20.38px;font-size:11.0px;padding-left:3px;"></div>
<div class="f gf" style="left:620px;top:441px;width:27px;height:20px;line-height:20.38px;font-size:11.0px;padding-left:3px;"></div>
<div class="f gf" style="left:620px;top:462px;width:27px;height:20px;line-height:20.38px;font-size:11.0px;padding-left:3px;"></div>
<div class="f gf" style="left:620px;top:484px;width:27px;height:20px;line-height:20.38px;font-size:11.0px;padding-left:3px;"></div>
<div class="f y gf" style="left:649px;top:398px;width:19px;height:21px;line-height:20.38px;font-size:11.0px;letter-spacing:-0.2px;text-align:right;padding-right:1.7px;color:#16167a;font-weight:bold;"><div style="right:1.7px;top:0;white-space:nowrap;">0.00</div></div>
<div class="f gf g" style="left:649px;top:420px;width:19px;height:20px;line-height:20.38px;font-size:11.0px;padding-left:3px;"></div>
<div class="f gf g" style="left:649px;top:441px;width:19px;height:20px;line-height:20.38px;font-size:11.0px;padding-left:3px;"></div>
<div class="f gf g" style="left:649px;top:462px;width:19px;height:20px;line-height:20.38px;font-size:11.0px;padding-left:3px;"></div>
<div class="f gf g" style="left:649px;top:484px;width:19px;height:20px;line-height:20.38px;font-size:11.0px;padding-left:3px;"></div>
<div class="f y gf" style="left:670px;top:398px;width:42px;height:21px;line-height:20.38px;font-size:11.0px;letter-spacing:-0.2px;text-align:right;padding-right:1.7px;color:#16167a;font-weight:bold;"><div style="right:1.7px;top:0;white-space:nowrap;">0</div></div>
<div class="f gf g" style="left:670px;top:420px;width:42px;height:20px;line-height:20.38px;font-size:11.0px;padding-left:3px;"></div>
<div class="f gf g" style="left:670px;top:441px;width:42px;height:20px;line-height:20.38px;font-size:11.0px;padding-left:3px;"></div>
<div class="f gf g" style="left:670px;top:462px;width:42px;height:20px;line-height:20.38px;font-size:11.0px;padding-left:3px;"></div>
<div class="f gf g" style="left:670px;top:484px;width:42px;height:20px;line-height:20.38px;font-size:11.0px;padding-left:3px;"></div>
<div class="f y gf" style="left:713px;top:398px;width:60px;height:21px;line-height:20.38px;font-size:11.0px;letter-spacing:-0.2px;text-align:right;padding-right:1.7px;color:#16167a;font-weight:bold;"><div style="right:1.7px;top:0;white-space:nowrap;">0.0000</div></div>
<div class="f gf g" style="left:713px;top:420px;width:60px;height:20px;line-height:20.38px;font-size:11.0px;padding-left:3px;"></div>
<div class="f gf g" style="left:713px;top:441px;width:60px;height:20px;line-height:20.38px;font-size:11.0px;padding-left:3px;"></div>
<div class="f gf g" style="left:713px;top:462px;width:60px;height:20px;line-height:20.38px;font-size:11.0px;padding-left:3px;"></div>
<div class="f gf g" style="left:713px;top:484px;width:60px;height:20px;line-height:20.38px;font-size:11.0px;padding-left:3px;"></div>
<div class="f y gf" style="left:776px;top:398px;width:40px;height:21px;line-height:20.38px;font-size:11.0px;letter-spacing:-0.2px;padding-left:0.2px;text-align:center;color:#16167a;font-weight:bold;">758975</div>
<div class="f gf g" style="left:776px;top:420px;width:40px;height:20px;line-height:20.38px;font-size:11.0px;padding-left:3px;"></div>
<div class="f gf g" style="left:776px;top:441px;width:40px;height:20px;line-height:20.38px;font-size:11.0px;padding-left:3px;"></div>
<div class="f gf g" style="left:776px;top:462px;width:40px;height:20px;line-height:20.38px;font-size:11.0px;padding-left:3px;"></div>
<div class="f gf g" style="left:776px;top:484px;width:40px;height:20px;line-height:20.38px;font-size:11.0px;padding-left:3px;"></div>
<div class="f y gf" style="left:818px;top:398px;width:34px;height:21px;line-height:20.38px;font-size:11.0px;letter-spacing:-0.2px;text-align:right;padding-right:1.7px;color:#16167a;font-weight:bold;"><div style="right:1.7px;top:0;white-space:nowrap;">100</div></div>
<div class="f gf g" style="left:818px;top:420px;width:34px;height:20px;line-height:20.38px;font-size:11.0px;padding-left:3px;"></div>
<div class="f gf g" style="left:818px;top:441px;width:34px;height:20px;line-height:20.38px;font-size:11.0px;padding-left:3px;"></div>
<div class="f gf g" style="left:818px;top:462px;width:34px;height:20px;line-height:20.38px;font-size:11.0px;padding-left:3px;"></div>
<div class="f gf g" style="left:818px;top:484px;width:34px;height:20px;line-height:20.38px;font-size:11.0px;padding-left:3px;"></div>
<div class="f y gf" style="left:854px;top:398px;width:19px;height:21px;line-height:20.38px;font-size:11.0px;letter-spacing:-0.2px;text-align:right;padding-right:1.7px;color:#8f9fbe;font-weight:bold;"><div style="right:1.7px;top:0;white-space:nowrap;">N</div></div>
<div class="f gf g" style="left:854px;top:420px;width:19px;height:20px;line-height:20.38px;font-size:11.0px;padding-left:3px;"></div>
<div class="f gf g" style="left:854px;top:441px;width:19px;height:20px;line-height:20.38px;font-size:11.0px;padding-left:3px;"></div>
<div class="f gf g" style="left:854px;top:462px;width:19px;height:20px;line-height:20.38px;font-size:11.0px;padding-left:3px;"></div>
<div class="f gf g" style="left:854px;top:484px;width:19px;height:20px;line-height:20.38px;font-size:11.0px;padding-left:3px;"></div>
<div class="f y gf" style="left:874px;top:398px;width:58px;height:21px;line-height:20.38px;font-size:11.0px;padding-left:1.5px;color:#16167a;font-weight:bold;"></div>
<div class="f gf" style="left:874px;top:420px;width:58px;height:20px;line-height:20.38px;font-size:11.0px;padding-left:3px;"></div>
<div class="f gf" style="left:874px;top:441px;width:58px;height:20px;line-height:20.38px;font-size:11.0px;padding-left:3px;"></div>
<div class="f gf" style="left:874px;top:462px;width:58px;height:20px;line-height:20.38px;font-size:11.0px;padding-left:3px;"></div>
<div class="f gf" style="left:874px;top:484px;width:58px;height:20px;line-height:20.38px;font-size:11.0px;padding-left:3px;"></div>
<div class="f y gf" style="left:933px;top:398px;width:48px;height:21px;line-height:20.38px;font-size:11.0px;padding-left:1.5px;color:#16167a;font-weight:bold;"></div>
<div class="f gf" style="left:933px;top:420px;width:48px;height:20px;line-height:20.38px;font-size:11.0px;padding-left:3px;"></div>
<div class="f gf" style="left:933px;top:441px;width:48px;height:20px;line-height:20.38px;font-size:11.0px;padding-left:3px;"></div>
<div class="f gf" style="left:933px;top:462px;width:48px;height:20px;line-height:20.38px;font-size:11.0px;padding-left:3px;"></div>
<div class="f gf" style="left:933px;top:484px;width:48px;height:20px;line-height:20.38px;font-size:11.0px;padding-left:3px;"></div>
<div class="f y gf" style="left:984px;top:398px;width:26px;height:21px;line-height:20.38px;font-size:11.0px;padding-left:1.5px;color:#16167a;font-weight:bold;"></div>
<div class="f gf g" style="left:984px;top:420px;width:26px;height:20px;line-height:20.38px;font-size:11.0px;padding-left:3px;"></div>
<div class="f gf g" style="left:984px;top:441px;width:26px;height:20px;line-height:20.38px;font-size:11.0px;padding-left:3px;"></div>
<div class="f gf g" style="left:984px;top:462px;width:26px;height:20px;line-height:20.38px;font-size:11.0px;padding-left:3px;"></div>
<div class="f gf g" style="left:984px;top:484px;width:26px;height:20px;line-height:20.38px;font-size:11.0px;padding-left:3px;"></div>
<div class="f y gf" style="left:70px;top:506px;width:61px;height:21px;line-height:20.38px;font-size:11.0px;letter-spacing:-0.2px;text-align:right;padding-right:1.7px;color:#16167a;font-weight:bold;"><div style="right:1.7px;top:0;white-space:nowrap;">1,200.000</div></div>
<div class="f y gf" style="left:132px;top:506px;width:63px;height:21px;line-height:20.38px;font-size:11.0px;letter-spacing:-0.2px;text-align:right;padding-right:1.7px;color:#16167a;font-weight:bold;"><div style="right:1.7px;top:0;white-space:nowrap;">62.000000</div></div>
<div class="f y gf" style="left:196px;top:506px;width:64px;height:21px;line-height:20.38px;font-size:11.0px;letter-spacing:-0.2px;text-align:right;padding-right:1.7px;color:#16167a;font-weight:bold;"><div style="right:1.7px;top:0;white-space:nowrap;">74,400.0000</div></div>
<div class="f y gf" style="left:261px;top:506px;width:74px;height:21px;line-height:22.38px;font-size:11.0px;padding-left:3px;"></div>
<div class="f y gf" style="left:425px;top:506px;width:62px;height:21px;line-height:20.38px;font-size:11.0px;letter-spacing:-0.2px;text-align:right;padding-right:1.5999999999999999px;color:#8a9aa6;font-weight:bold;"><div style="right:1.5999999999999999px;top:0;white-space:nowrap;">0.00</div></div>
<div class="f y gf" style="left:488px;top:506px;width:55px;height:21px;line-height:20.38px;font-size:11.0px;letter-spacing:-0.2px;text-align:right;padding-right:1.5999999999999999px;color:#8a9aa6;font-weight:bold;"><div style="right:1.5999999999999999px;top:0;white-space:nowrap;">0.000</div></div>
<div class="f y gf" style="left:670px;top:506px;width:42px;height:21px;line-height:20.38px;font-size:11.0px;letter-spacing:-0.2px;text-align:right;padding-right:1.5999999999999999px;color:#8a9aa6;font-weight:bold;"><div style="right:1.5999999999999999px;top:0;white-space:nowrap;">0</div></div>
<div class="f y gf" style="left:713px;top:506px;width:60px;height:21px;line-height:20.38px;font-size:11.0px;letter-spacing:-0.2px;text-align:right;padding-right:1.5999999999999999px;color:#8a9aa6;font-weight:bold;"><div style="right:1.5999999999999999px;top:0;white-space:nowrap;">0.0000</div></div>
<div class="f y gf" style="left:874px;top:506px;width:58px;height:21px;line-height:22.38px;font-size:11.0px;padding-left:3px;"></div>
<div class="f y gf" style="left:933px;top:506px;width:48px;height:21px;line-height:22.38px;font-size:11.0px;padding-left:3px;"></div>
<div class="f y gf" style="left:984px;top:506px;width:26px;height:21px;line-height:22.38px;font-size:11.0px;padding-left:3px;"></div>
<div style="left:5.5px;top:397px;width:7px;height:109px;background:#e9eef6;border-radius:5px 0 0 5px;border:1px solid #d0dae8;border-right:none;"></div>
<div style="left:5px;top:413px;width:1.5px;height:77px;background:#ffffc2;"></div>
<svg style="left:5px;top:397px" width="8" height="109" viewBox="0 0 8 109"><path d="M6.5 5.6 V10 H3.4 Z" fill="#555"/><path d="M2.6 13.8 H8" stroke="#666" stroke-width="0.9"/><path d="M2.6 93.6 H8" stroke="#8aa0c0" stroke-width="0.9"/><path d="M3.4 98 H6.5 V102.4 Z" fill="#555"/><path d="M3 46.6 L4.2 45.6 M3 55 L4.2 54" stroke="#777" stroke-width="0.7"/></svg>
<div class="l" style="top:538.09px;font-size:8.4px;color:#222;left:29.6px;letter-spacing:-0.546px;">Produto</div>
<div class="f y" style="left:84px;top:532px;width:408px;height:20px;line-height:20.38px;font-size:11.0px;padding-left:3px;"></div>
<div class="l" style="top:562.99px;font-size:8.4px;color:#222;left:13px;letter-spacing:-0.475px;">Produto SCM</div>
<div class="f y" style="left:85px;top:558px;width:62px;height:18px;line-height:16.38px;font-size:11.0px;padding-left:3px;"></div>
<div class="f y" style="left:150px;top:558px;width:342px;height:18px;line-height:16.38px;font-size:11.0px;padding-left:3px;"></div>
<div class="btn" style="left:503px;top:533px;width:93px;height:19px;"></div>
<div class="l" style="top:538.19px;font-size:11.0px;color:#000;left:524.7px;letter-spacing:-0.41px;word-spacing:0.9px;">Limpa Tela</div>
<div class="btn" style="left:605px;top:533px;width:92px;height:19px;"></div>
<div class="l" style="top:538.19px;font-size:11.0px;color:#000;left:617.3px;letter-spacing:-0.339px;word-spacing:0.9px;">Atualizar NCM</div>
<div class="l" style="top:561.89px;font-size:11.0px;color:#000;left:500.3px;letter-spacing:-0.478px;word-spacing:0.9px;">Nota Remessa SCM</div>
<div class="f y" style="left:598px;top:558px;width:166px;height:18px;line-height:16.38px;font-size:11.0px;padding-left:3px;"></div>
<div class="l" style="top:532.29px;font-size:8.4px;color:#222;left:887.4px;letter-spacing:-0.513px;">Pauta Base</div>
<div class="l" style="top:555.19px;font-size:8.4px;color:#222;left:841px;letter-spacing:-0.243px;">NCM</div>
<div class="l" style="top:552.39px;font-size:8.4px;color:#222;left:938.3px;letter-spacing:-0.53px;">Pauta</div>
<div class="l" style="top:554.89px;font-size:8.4px;color:#222;left:993.6px;">Vlr</div>
<div class="f y gf" style="left:820px;top:565px;width:64px;height:18px;line-height:19.18px;font-size:11.0px;letter-spacing:-0.2px;padding-left:2.3px;color:#16167a;font-weight:bold;">5119999</div>
<div class="f gf" style="left:820px;top:584px;width:64px;height:17px;line-height:14.38px;font-size:11.0px;padding-left:3px;"></div>
<div class="f gf" style="left:820px;top:602px;width:64px;height:18px;line-height:16.38px;font-size:11.0px;padding-left:3px;"></div>
<div class="f gf" style="left:820px;top:621px;width:64px;height:18px;line-height:16.38px;font-size:11.0px;padding-left:3px;"></div>
<div class="f gf" style="left:820px;top:640px;width:64px;height:18px;line-height:16.38px;font-size:11.0px;padding-left:3px;"></div>
<div class="f y gf" style="left:885px;top:565px;width:46px;height:18px;line-height:19.18px;font-size:11.0px;padding-left:2.3px;color:#16167a;font-weight:bold;"></div>
<div class="f gf g" style="left:885px;top:584px;width:46px;height:17px;line-height:14.38px;font-size:11.0px;padding-left:3px;"></div>
<div class="f gf g" style="left:885px;top:602px;width:46px;height:18px;line-height:16.38px;font-size:11.0px;padding-left:3px;"></div>
<div class="f gf g" style="left:885px;top:621px;width:46px;height:18px;line-height:16.38px;font-size:11.0px;padding-left:3px;"></div>
<div class="f gf g" style="left:885px;top:640px;width:46px;height:18px;line-height:16.38px;font-size:11.0px;padding-left:3px;"></div>
<div class="f y gf" style="left:934px;top:565px;width:47px;height:18px;line-height:19.18px;font-size:11.0px;padding-left:2.3px;color:#16167a;font-weight:bold;"></div>
<div class="f gf g" style="left:934px;top:584px;width:47px;height:17px;line-height:14.38px;font-size:11.0px;padding-left:3px;"></div>
<div class="f gf g" style="left:934px;top:602px;width:47px;height:18px;line-height:16.38px;font-size:11.0px;padding-left:3px;"></div>
<div class="f gf g" style="left:934px;top:621px;width:47px;height:18px;line-height:16.38px;font-size:11.0px;padding-left:3px;"></div>
<div class="f gf g" style="left:934px;top:640px;width:47px;height:18px;line-height:16.38px;font-size:11.0px;padding-left:3px;"></div>
<div class="f y gf" style="left:984px;top:565px;width:26px;height:18px;line-height:19.18px;font-size:11.0px;letter-spacing:-0.2px;padding-left:2.3px;color:#8a9aa6;font-weight:bold;">74,400</div>
<div class="f gf" style="left:984px;top:584px;width:26px;height:17px;line-height:14.38px;font-size:11.0px;padding-left:3px;"></div>
<div class="f gf" style="left:984px;top:602px;width:26px;height:18px;line-height:16.38px;font-size:11.0px;padding-left:3px;"></div>
<div class="f gf" style="left:984px;top:621px;width:26px;height:18px;line-height:16.38px;font-size:11.0px;padding-left:3px;"></div>
<div class="f gf" style="left:984px;top:640px;width:26px;height:18px;line-height:16.38px;font-size:11.0px;padding-left:3px;"></div>
<div class="f y gf" style="left:885px;top:658px;width:46px;height:18px;line-height:16.38px;font-size:11.0px;padding-left:3px;"></div>
<div class="f y gf" style="left:934px;top:658px;width:47px;height:18px;line-height:16.38px;font-size:11.0px;padding-left:3px;"></div>
<div class="f y gf" style="left:984px;top:658px;width:26px;height:18px;line-height:19.18px;font-size:11.0px;letter-spacing:-0.2px;padding-left:2.3px;color:#8a9aa6;font-weight:bold;">74,400</div>
<div style="left:0;top:681px;width:997px;height:38px;background:#e9eef6;"></div>
<div style="left:0;top:681px;width:997px;height:1px;background:#4f6fa6;"></div>
<div style="left:2px;top:682px;width:1010px;height:36px;border:1px solid #b8c8e0;border-right:none;border-top:none;border-radius:8px 0 0 8px;"></div>
<div style="left:8px;top:701px;width:990px;height:1px;background:#b9cbe6;"></div>
<div class="l" style="top:704.94px;font-size:12px;color:#2a2a2a;left:8.3px;letter-spacing:-0.094px;word-spacing:0.9px;">Record: 1/1</div>
<div style="left:134px;top:703px;width:1.3px;height:13.5px;background:#5f82b8;"></div>
<div style="left:162px;top:703px;width:1.3px;height:13.5px;background:#5f82b8;"></div>
<div style="left:242px;top:703px;width:1.3px;height:13.5px;background:#5f82b8;"></div>
<div style="left:331px;top:703px;width:1.3px;height:13.5px;background:#5f82b8;"></div>
<div style="left:386px;top:703px;width:1.3px;height:13.5px;background:#5f82b8;"></div>
<div style="left:0;top:718px;width:997px;height:1px;background:#b0b8c4;"></div>
</div>
</body></html>
